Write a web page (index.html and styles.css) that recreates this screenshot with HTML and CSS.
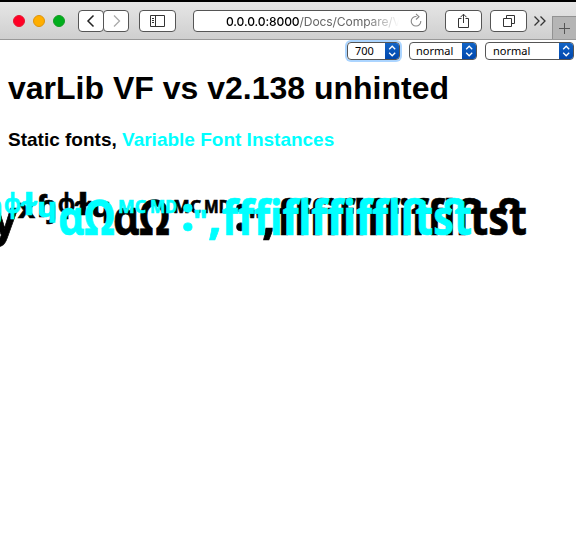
FILE: index.html
```html
<!DOCTYPE html>
<html lang="en"><head><meta charset="utf-8"><title>varLib VF</title><link rel="stylesheet" href="styles.css"></head>
<body>
<header class="toolbar">
  <div class="lights"><i class="red"></i><i class="amber"></i><i class="green"></i></div>
  <div class="nav">
    <span class="btn back"><svg width="24" height="20"><path d="M14.5 4.5 9 10l5.500 5.500" fill="none" stroke="#222" stroke-width="1.500"/></svg></span>
    <span class="btn forward"><svg width="24" height="20"><path d="M10 4.500 15.500 10 10 15.500" fill="none" stroke="#aaa" stroke-width="1.300"/></svg></span>
  </div>
  <span class="btn sidebar"><svg width="35" height="20"><path d="M10.500 4.500h14v11h-14zM15.500 4.500v11M12 7.500h2M12 9.500h2M12 11.500h2" fill="none" stroke="#333"/></svg></span>
  <div class="address"><span class="url"><b>0.0.0.0:8000</b>/Docs/Compare/V</span>
    <svg width="14" height="16"><path d="M7.500 3.500a4.800 4.800 0 1 0 4.300 4.500M7 1l3 2.700L7 6.500" fill="none" stroke="#888" stroke-width="1.100"/></svg></div>
  <span class="btn share"><svg width="35" height="20"><path d="M15.500 7.500h-3v9h10v-9h-3M17.500 12V3.500M14.500 6.200l3-3 3 3" fill="none" stroke="#333"/></svg></span>
  <span class="btn tabs"><svg width="35" height="20"><path d="M12.500 7.500h8v8h-8zM15.500 7V4.500h8v8h-3" fill="none" stroke="#333"/></svg></span>
  <svg class="more" width="14" height="12"><path d="m1.500 1.500 4.500 4.500-4.500 4.500M7.500 1.500 12 6l-4.500 4.500" fill="none" stroke="#333" stroke-width="1.300"/></svg>
  <span class="newtab"><svg width="23" height="23"><path d="M6 11.500h11M11.500 6v11" stroke="#555" fill="none"/></svg></span>
</header>
<div class="controls">
  <div class="select weight focused"><span>700</span><i><svg width="14" height="16"><path d="m4.200 6.200 3-3 3 3M4.200 9.800l3 3 3-3" fill="none" stroke="#fff" stroke-width="1.300"/></svg></i></div>
  <div class="select style"><span>normal</span><i><svg width="14" height="16"><path d="m4.200 6.200 3-3 3 3M4.200 9.800l3 3 3-3" fill="none" stroke="#fff" stroke-width="1.300"/></svg></i></div>
  <div class="select stretch"><span>normal</span><i><svg width="14" height="16"><path d="m4.200 6.200 3-3 3 3M4.200 9.800l3 3 3-3" fill="none" stroke="#fff" stroke-width="1.300"/></svg></i></div>
</div>
<main>
  <h1>varLib VF vs v2.138 unhinted</h1>
  <h3>Static fonts, <span>Variable Font Instances</span></h3>
  <svg class="specimen" width="576" height="80" viewBox="0 180 576 80">
    <g class="static">
      <text x="-9" y="235" textLength="27" lengthAdjust="spacingAndGlyphs">y</text>
      <g class="sup"><text x="18" y="218" textLength="17" lengthAdjust="spacingAndGlyphs">x</text><text class="tall" x="37" y="217" textLength="20" lengthAdjust="spacingAndGlyphs">ɧ</text><text x="58" y="213" textLength="17" lengthAdjust="spacingAndGlyphs">ф</text><text class="tall" x="75" y="215" textLength="16" lengthAdjust="spacingAndGlyphs">ɫ</text><text x="91" y="217" textLength="20" lengthAdjust="spacingAndGlyphs">ʮ</text></g>
      <text x="113" y="235" textLength="57" lengthAdjust="spacingAndGlyphs">ɑΩ</text>
      <g class="mark"><text x="173" y="213" textLength="28" lengthAdjust="spacingAndGlyphs">MC</text><text x="204" y="213" textLength="26" lengthAdjust="spacingAndGlyphs">MD</text></g>
      <text x="234" y="231">:</text><text class="quote" x="248" y="232">"</text><text x="262" y="234">,</text>
      <text x="277" y="235" textLength="250" lengthAdjust="spacingAndGlyphs">ﬀﬁﬂﬃﬄﬅﬆ</text>
    </g>
    <g class="variable">
      <g class="sup"><text class="tall" x="-17" y="217" textLength="20" lengthAdjust="spacingAndGlyphs">ɧ</text><text x="4" y="213" textLength="17" lengthAdjust="spacingAndGlyphs">ф</text><text class="tall" x="21" y="215" textLength="16" lengthAdjust="spacingAndGlyphs">ɫ</text><text x="37" y="217" textLength="20" lengthAdjust="spacingAndGlyphs">ɥ</text></g>
      <text x="58" y="235" textLength="57" lengthAdjust="spacingAndGlyphs">ɑΩ</text>
      <g class="mark"><text x="118" y="213" textLength="28" lengthAdjust="spacingAndGlyphs">MC</text><text x="150" y="213" textLength="27" lengthAdjust="spacingAndGlyphs">MD</text></g>
      <text x="181" y="231">:</text><text class="quote" x="193" y="232">"</text><text x="208" y="234">,</text>
      <text x="222" y="235" textLength="250" lengthAdjust="spacingAndGlyphs">ﬀﬁﬂﬃﬄﬅﬆ</text>
    </g>
  </svg>
</main>
</body></html>
```
FILE: styles.css
```css
* { box-sizing: border-box; }
body { margin: 0; height: 537px; overflow: hidden; background: #fff; color: #000; font-family: "Liberation Sans", sans-serif; }
svg { display: block; flex-shrink: 0; }
.toolbar { display: flex; align-items: flex-start; height: 40px; padding: 8px 0 0 13px; border-top: 2px solid #000; border-bottom: 1px solid #999; background: linear-gradient(#e6e6e6, #cfcfcf); }
.lights { display: flex; gap: 8px; width: 65px; padding-top: 5px; }
.lights i { width: 12px; height: 12px; border-radius: 50%; }
.red { background: #ff0026; border: 1px solid #e5172f; }
.amber { background: #ffae00; border: 1px solid #dd930c; }
.green { background: #00ae1c; border: 1px solid #159b25; }
.nav { display: flex; width: 61px; }
.btn { display: flex; justify-content: center; align-items: center; flex: none; height: 22px; background: #fff; border: 1px solid #555; border-radius: 4px; }
.back { width: 26px; }
.forward { width: 26px; margin-left: -1px; }
.sidebar { width: 37px; margin-right: 17px; }
.address { display: flex; align-items: center; flex: none; width: 234px; height: 22px; margin-right: 18px; padding-left: 32px; border: 1px solid #555; border-radius: 4px; background: #fff; }
.url { width: 183px; padding-top: 1px; overflow: hidden; white-space: nowrap; font: 12.1px/20px Inter, sans-serif; letter-spacing: -.12px; color: #666; mask-image: linear-gradient(to right, #000 140px, transparent 173px); }
.url b { font-weight: 500; color: #000; }
.share { width: 37px; margin-right: 8px; }
.tabs { width: 37px; margin-right: 6px; }
.more { margin-top: 5px; }
.newtab { flex: none; width: 24px; height: 23px; margin: 6px 0 0 5px; background: #b5b5b5; border: 1px solid #929292; border-width: 1px 0 0 1px; }
.controls { display: flex; height: 28px; padding: 2px 2px 0 347px; }
.select { display: flex; justify-content: space-between; flex: none; height: 18px; padding-left: 6px; border: 1px solid #555; border-radius: 4px; font: 11px/16px "Noto Sans", sans-serif; overflow: hidden; }
.select i { width: 14px; background: linear-gradient(#1264c6, #0047ad); }
.weight { width: 53px; margin-right: 9px; padding-left: 7px; }
.style { width: 68px; margin-right: 8px; }
.stretch { width: 89px; padding-left: 7px; }
.focused { box-shadow: 0 0 0 2px #acd5ff; }
h1 { margin: 2px 8px 0; font-size: 32px; line-height: 37px; white-space: nowrap; }
h3 { margin: 22px 8px 0; font-size: 19px; line-height: 22px; white-space: nowrap; }
h3 span { color: #0ff; }
.specimen { margin-top: 29px; font: bold 49px "Noto Sans", sans-serif; stroke: #000; stroke-width: .7px; }
.sup { font-size: 27px; }
.sup .tall { font-size: 31px; }
.mark { font-size: 18px; }
.quote { font-size: 31px; }
.variable { fill: #0ff; stroke: #0ff; }
```
